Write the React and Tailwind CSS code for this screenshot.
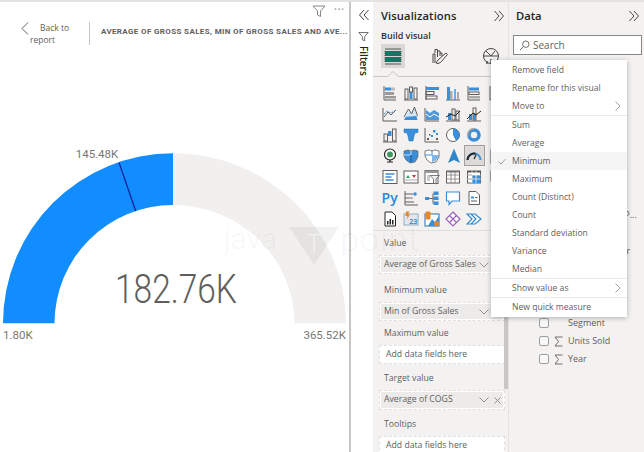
import React from "react";

const G = "#605e5c";
const B = "#3b8fd9";
const D = "#252423";

const icons = [
  <><path d="M2 1v14h12" stroke={G} fill="none"/><rect x="3" y="2.500" width="6" height="3" fill={B}/><rect x="9" y="2.500" width="4" height="3" fill="#bbb"/><rect x="3" y="7" width="9" height="3" fill="#999"/><rect x="3" y="11" width="11" height="2.500" fill="#999"/></>,
  <><path d="M1 15h14" stroke={G}/><rect x="2" y="4" width="3" height="10" fill="none" stroke={G}/><rect x="6.500" y="7" width="3" height="7" fill={B}/><rect x="6.500" y="2" width="3" height="5" fill="none" stroke={G}/><rect x="11" y="3" width="3" height="11" fill="none" stroke={G}/></>,
  <><path d="M2 1v14" stroke={G}/><rect x="2" y="2" width="13" height="3" fill={B}/><rect x="2" y="6.500" width="8" height="3" fill="none" stroke={G}/><rect x="2" y="11" width="11" height="3" fill="none" stroke={G}/></>,
  <><path d="M1 15h14" stroke={G}/><rect x="2" y="2" width="3" height="13" fill={B}/><rect x="5" y="6" width="2.500" height="9" fill="#aaa"/><rect x="9" y="4" width="2" height="11" fill={B} opacity=".7"/><rect x="12" y="7" width="2" height="8" fill="#aaa"/></>,
  <><path d="M2 1v14h12" stroke={G} fill="none"/><rect x="3" y="2.500" width="10" height="3" fill={B}/><rect x="3" y="7" width="10" height="2.500" fill="none" stroke={G}/><rect x="3" y="11" width="11" height="2.500" fill="#aaa"/></>,
  <><path d="M2 1v14h12" stroke={G} fill="none"/><rect x="4" y="4" width="9" height="3" fill={B}/></>,
  <><path d="M1 2v13h14" stroke={G} fill="none"/><path d="M2 11l4-5 3 3 5-5" stroke={G} fill="none"/><path d="M2 8l3-3 4 2 5-3" stroke={B} fill="none" strokeDasharray="2 1"/></>,
  <><path d="M1 14L5.500 5l3 4 3-7 3 12z" fill={B}/><path d="M1 11l4.500-8 3 5 3-7 3 9" stroke={G} fill="#fff" fillOpacity=".75"/></>,
  <><path d="M1 2v13h14" stroke={G} fill="none"/><path d="M2 4l4 3 4-3 5 3v7H2z" fill={B} opacity=".9"/><path d="M2 8l4 3 4-3 5 3" stroke="#fff" fill="none"/></>,
  <><path d="M1 15h14" stroke={G}/><rect x="3" y="7" width="3" height="7" fill={B}/><rect x="7" y="3" width="3" height="11" fill="none" stroke={G}/><rect x="11" y="5" width="3" height="9" fill="none" stroke={G}/><path d="M1 11l5-3 4 2 5-5" stroke={D} fill="none"/></>,
  <><path d="M1 15h14" stroke={G}/><rect x="3" y="8" width="3" height="6" fill={B}/><rect x="7" y="2" width="3" height="12" fill="none" stroke={G}/><rect x="7" y="7" width="3" height="7" fill={B}/><path d="M1 13l6-6 3 2 5-4" stroke={D} fill="none"/></>,
  <rect x="3" y="3" width="12" height="12" fill="#c66" opacity=".6"/>,
  <><path d="M1 15h14" stroke={G}/><rect x="2" y="7" width="3.500" height="7" fill="none" stroke={G}/><rect x="6" y="4" width="3.500" height="5" fill={B}/><rect x="10.500" y="2" width="3.500" height="12" fill="none" stroke={G}/></>,
  <path d="M1 2h14v3.500l-3 .5-1 3-1 5H6L5 9 4 6l-3-.5z" fill={B} stroke="#1f6fb2" strokeWidth=".5"/>,
  <><path d="M1 1v14h14" stroke={G} fill="none"/><g fill={G}><rect x="3" y="11" width="2" height="2"/><rect x="5" y="7" width="1.500" height="1.500"/><rect x="12" y="11" width="2" height="2"/></g><g fill={B}><rect x="9" y="3" width="2.500" height="2.500"/><rect x="7" y="8" width="2" height="2"/><rect x="12" y="6" width="2" height="2"/></g></>,
  <><circle cx="8" cy="8" r="6.500" fill="#fff" stroke={G}/><path d="M8 1.500A6.500 6.500 0 0 1 14.500 8 6.500 6.500 0 0 1 11 13.800L8 8z" fill={B}/></>,
  <><circle cx="8" cy="8" r="5" fill="none" stroke={B} strokeWidth="3.500"/><path d="M8 1.500A6.500 6.500 0 0 0 2 10" fill="none" stroke="#aaa" strokeWidth="1.500"/></>,
  <rect x="3" y="1" width="5" height="14" fill={B}/>,
  <><circle cx="8" cy="6.500" r="5.500" fill="#fff" stroke={D} strokeWidth="1.200"/><circle cx="8" cy="6.500" r="3" fill="#3e9a5c"/><path d="M5 14h6M8 12v2" stroke={D} strokeWidth="1.200"/></>,
  <><path d="M1 3l4-1 3 1 3-1 4 1v6l-3 5-5 1-4-3-2-4z" fill={B} stroke={G} strokeWidth=".7"/><path d="M1 7h7V3" stroke="#fff" fill="none" opacity=".7"/><path d="M8 7v7" stroke="#1f4f7a"/></>,
  <><path d="M1 3l4-1 3 1 3-1 4 1v6l-3 5-5 1-4-3-2-4z" fill="#fff" stroke={G} strokeWidth=".8"/><path d="M8 7h7l-1 3-3 3-3 1z" fill={B} opacity=".65"/><path d="M1 7h7V3" stroke={B} fill="none"/></>,
  <path d="M9 .5L15 15l-6-3-6 3z" fill="#2f87d0"/>,
  <><path d="M1.500 12a6.500 6.500 0 0 1 13 0" fill="none" stroke={B} strokeWidth="2"/><path d="M1.500 12a6.500 6.500 0 0 1 8-6.300" fill="none" stroke={D} strokeWidth="2"/><path d="M8 11l2-4" stroke={D} strokeWidth="1.200"/></>,
  <rect x="3" y="2" width="14" height="13" fill="none" stroke={G}/>,
  <><rect x="1" y="1.500" width="14" height="13" fill="#fff" stroke={G}/><path d="M3.500 5h9M3.500 8h6M3.500 11h8" stroke={B} strokeWidth="1.300"/></>,
  <><rect x="1" y="2" width="14" height="12" fill="#fff" stroke={G}/><path d="M1 11h14" stroke="#aaa"/><path d="M3 9l2-3 2 3z" fill="#3e9a5c"/><path d="M9 6l2 3 2-3z" fill="#d13438"/></>,
  <><rect x="1" y="1.500" width="13" height="13" fill="#fff" stroke={G}/><rect x="1" y="1.500" width="13" height="2.500" fill="#999"/><path d="M3 7h3M3 9h3M3 11h3" stroke="#999"/><path d="M6 6.500h9.500L12 10v5l-2.500-1v-4z" fill="#eee" stroke={G} strokeWidth=".8"/></>,
  <><rect x="1.500" y="2" width="13" height="12" fill="#fff" stroke={G}/><path d="M1.500 6h13M1.500 10h13M6 2v12M10 2v12" stroke="#8a8886" strokeWidth=".9"/><rect x="1.500" y="2" width="13" height="1.500" fill="#777"/></>,
  <><rect x="1.500" y="2" width="13" height="12" fill="#fff" stroke={G}/><rect x="6" y="6" width="8.500" height="8" fill={B}/><rect x="1.500" y="2" width="13" height="1.500" fill="#555"/><path d="M1.500 6h13M1.500 10h13M6 2v12M10 2v12" stroke="#fff" strokeWidth=".7"/><path d="M1.500 6h4.500M1.500 10h4.500" stroke="#8a8886" strokeWidth=".8"/></>,
  <rect x="3" y="2" width="13" height="10" fill="none" stroke={G}/>,
  null,
  <><path d="M2 1v14h13" stroke={G} fill="none"/><path d="M2 4h8M2 8h5M2 12h9" stroke={G}/><circle cx="12" cy="4" r="1.800" fill={B}/><circle cx="8.500" cy="8" r="1.300" fill="#aaa"/></>,
  <><rect x="1" y="7" width="4" height="3" fill={B}/><path d="M5 8.500h4M9 3.500v10" stroke={G}/><rect x="9.500" y="1.500" width="5" height="3.500" fill={B}/><rect x="9.500" y="6.500" width="5" height="3.500" fill={B}/><rect x="9.500" y="11.500" width="5" height="3.500" fill={B}/></>,
  <path d="M1.500 2h13v9H7l-3 3.500V11H1.500z" fill="#fff" stroke={B} strokeWidth="1.200"/>,
  <><path d="M3 1.500h7l3.500 3.500v9.500H3z" fill="#fff" stroke={G}/><rect x="5" y="6.500" width="3" height="2" fill={B}/><path d="M5 11h6M9 7.500h2.500" stroke={G}/></>,
  <path d="M4 3a2 2 0 0 1 2-2v3M3 7h2" stroke={G} fill="none"/>,
  <><path d="M3 1h7l3.500 3.500V15H3z" fill="#fff" stroke={D}/><rect x="5" y="10" width="1.500" height="3.500" fill={D}/><rect x="7.500" y="8" width="1.500" height="5.500" fill={D}/><rect x="10" y="9" width="1.500" height="4.500" fill={D}/></>,
  <><rect x="1" y="3" width="14" height="11" fill="#dcebf7" stroke="#9ab"/><path d="M3 .5h3.500L5 3.500h2L3.500 9 4.500 5h-2z" fill="#e8862a"/><text x="6.200" y="12.500" fontSize="7" fontWeight="700" fill={B} fontFamily="Open Sans, sans-serif">23</text></>,
  <><rect x="1" y="3" width="14" height="12" fill="#fff" stroke="#2a6ca8"/><path d="M4 15l4-7 3 3 4-6v10z" fill={B}/><rect x="1.500" y=".5" width="5" height="8" rx="1" fill="#e8862a"/><circle cx="12.500" cy="12.500" r="2.500" fill="#e8862a"/></>,
  <><path d="M8 1l7 7-7 7-7-7z" fill="#fff" stroke="#9b5fb5" strokeWidth="1.200"/><path d="M4.500 4.500l7 7M11.500 4.500l-7 7" stroke="#9b5fb5" strokeWidth="1.200"/></>,
  <path d="M1 3h8l6 5-6 5H1l5-5zM5 3l5 5-5 5" fill="#fff" stroke="#2f87d0" strokeWidth="1.200"/>,
  <path d="M9 8h6" stroke="#d0862a" strokeWidth="1.500"/>,
];

function Chevrons({ left }) {
  return (
    <svg width="12" height="12" viewBox="0 0 12 12" fill="none" stroke="#484644" strokeWidth="1">
      {left ? <path d="M6 1L1.500 6 6 11M10.500 1L6 6l4.500 5" /> : <path d="M1.500 1L6 6l-4.500 5M6 1l4.500 5L6 11" />}
    </svg>
  );
}

function Funnel({ size = 14, color = "#8a8886" }) {
  return (
    <svg width={size} height={size} viewBox="0 0 14 14" fill="none" stroke={color} strokeWidth="1">
      <path d="M1 2h12L8.500 7v5.500l-3-1.500V7z" />
    </svg>
  );
}

function Down() {
  return (
    <svg width="10" height="6" viewBox="0 0 10 6" fill="none" stroke="#8a8886" strokeWidth=".9">
      <path d="M.5.500L5 5 9.500.500" />
    </svg>
  );
}

function Well({ label, value, close, mb, h = "h-[20px]" }) {
  return (
    <div className={mb}>
      <div className="h-[12px] pl-[5px] text-[8.700px] leading-[12px] text-[#605e5c] mb-[6px]">{label}</div>
      {value ? (
        <div className={`${h} border border-dashed border-[#e1dfdd] bg-white p-[1px] w-[126px]`}>
          <div className={`flex items-center justify-between h-full bg-[#edebe9] pl-[3px] text-[8.700px] text-[#605e5c] ${close ? "pr-[2px]" : "pr-[14px]"}`}>
            <span className="whitespace-nowrap">{value}</span>
            <span className="flex items-center gap-[5px] shrink-0">
              <Down />
              {close && (
                <svg width="7" height="7" viewBox="0 0 7 7" stroke="#8a8886" strokeWidth=".9">
                  <path d="M.5.500l6 6M6.500.500l-6 6" />
                </svg>
              )}
            </span>
          </div>
        </div>
      ) : (
        <div className={`${h} border border-dashed border-[#e1dfdd] bg-white w-[126px] pl-[6px] flex items-center text-[8.700px] text-[#605e5c]`}>
          Add data fields here
        </div>
      )}
    </div>
  );
}

function Field({ name, sigma }) {
  return (
    <div className="h-[18px] flex items-center pl-[30px]">
      <span className="w-[10px] h-[10px] rounded-[2px] border border-[#a19f9d] bg-[#f8f8f8] shrink-0" />
      <span className="w-[19px] flex justify-center shrink-0">
        {sigma && (
          <svg width="9" height="11" viewBox="0 0 9 11" fill="none" stroke="#605e5c" strokeWidth=".9">
            <path d="M8.500 1H1l3.500 4.500L1 10h7.500" />
          </svg>
        )}
      </span>
      <span className="text-[9px] whitespace-nowrap text-[#605e5c]">{name}</span>
    </div>
  );
}

function MenuItem({ children, arrow, active, check }) {
  return (
    <div className={`relative h-[18px] flex items-center justify-between pl-[21px] pr-[6px] text-[8.600px] text-[#605e5c] ${active ? "bg-[#f5f5f5]" : ""}`}>
      {check && (
        <svg className="absolute left-[7px] top-[6px]" width="8" height="7" viewBox="0 0 8 7" fill="none" stroke="#8a8886" strokeWidth=".8">
          <path d="M.5 3.500L3 6 7.500 1" />
        </svg>
      )}
      <span>{children}</span>
      {arrow && (
        <svg width="6" height="10" viewBox="0 0 6 10" fill="none" stroke="#8a8886" strokeWidth=".8">
          <path d="M.5.500L5 5 .5 9.500" />
        </svg>
      )}
    </div>
  );
}

export default function App() {
  return (
    <div className="relative w-[644px] h-[452px] overflow-hidden bg-white flex flex-col font-['Open_Sans',sans-serif]">
      <div className="h-[2px] bg-[#e3e3e3] shrink-0" />
      <div className="flex flex-1 min-h-0">
        {/* report */}
        <div className="w-[351px] shrink-0 border-r-[2px] border-[#c8c6c4] bg-white flex flex-col">
          <div className="flex justify-end items-center gap-[8px] h-[17px] pr-[4px] pt-[1px]">
            <Funnel size={14} />
            <span className="text-[7px] leading-none tracking-[1px] text-[#a19f9d] -mt-[4px]">•••</span>
          </div>
          <div className="flex items-center h-[26px] mt-[1px] pl-[21px]">
            <svg width="8" height="13" viewBox="0 0 8 13" fill="none" stroke="#605e5c" strokeWidth="1" className="-mt-[9px]">
              <path d="M7 .5L1 6.500 7 12.500" />
            </svg>
            <div className="w-[69px] -ml-[8px] pl-[9px] text-[8.500px] leading-[12px] text-[#605e5c] mt-[2px]">
              <div className="pl-[10px]">Back to</div>
              <div>report</div>
            </div>
            <div className="h-[23px] w-px bg-[#c8c6c4] -ml-[1px]" />
            <div className="ml-[11px] -mt-[2px] text-[8px] font-['Roboto',sans-serif] font-bold tracking-[.36px] text-[#605e5c] whitespace-nowrap">
              AVERAGE OF GROSS SALES, MIN OF GROSS SALES AND AVE...
            </div>
          </div>
          <svg width="349" height="215" viewBox="0 0 349 215" className="mt-[94px]">
            <path d="M3 183.300A170 170 0 0 1 173 13.300V65A118.500 118.500 0 0 0 54.500 183.300Z" fill="#118dff" />
            <path d="M173 13.300A173 170 0 0 1 346 183.300H294.500A121.500 118.500 0 0 0 173 65Z" fill="#f1f0ef" />
            <path d="M119 22.500L135.700 71" stroke="#12239e" strokeWidth="1.300" />
            <text x="97" y="18" textAnchor="middle" fontSize="11.500" fill="#777" fontFamily="Roboto, sans-serif">145.48K</text>
            <text x="115" y="163" textLength="122" lengthAdjust="spacingAndGlyphs" fontSize="40" fontWeight="300" fill="#605e5c" fontFamily="Roboto, sans-serif">182.76K</text>
            <text x="3" y="199" fontSize="11.500" fill="#777" fontFamily="Roboto, sans-serif">1.80K</text>
            <text x="346" y="199" textAnchor="end" fontSize="11.500" fill="#777" fontFamily="Roboto, sans-serif">365.52K</text>
          </svg>
        </div>

        {/* filters rail */}
        <div className="w-[22px] shrink-0 bg-white flex flex-col items-center pl-[3px]">
          <div className="mt-[7px]"><Chevrons left /></div>
          <div className="mt-[10px]"><Funnel size={11} color="#484644" /></div>
          <div className="mt-[4px] text-[10px] font-semibold leading-none text-[#252423] [writing-mode:vertical-rl]">Filters</div>
        </div>

        {/* visualizations */}
        <div className="relative w-[136px] shrink-0 bg-[#f3f2f1] border-r border-[#e6e4e2] pl-[3px]">
          <div className="flex items-center justify-between h-[24px] pl-[5px] pr-[5px] pt-[4px] w-[134px]">
            <span className="text-[11.200px] font-semibold text-[#252423] tracking-[.1px] whitespace-nowrap">Visualizations</span>
            <Chevrons />
          </div>
          <div className="pl-[5px] text-[9px] font-semibold leading-[12px] mt-[4px] text-[#323130]">Build visual</div>
          <div className="flex items-center pl-[5px] mt-[2px] h-[24px] w-[130px]">
            <div className="w-[24px] h-[24px] bg-[#d9d8d6] flex items-center justify-center shrink-0">
              <svg width="18" height="17" viewBox="0 0 18 17">
                <path d="M1 1h16M1 16h16" stroke="#555" />
                <rect x="1" y="3" width="16" height="5" fill="#117865" />
                <rect x="1" y="9" width="16" height="5" fill="#117865" />
                <path d="M1 3v11M17 3v11" stroke="#555" strokeDasharray="1 1" />
              </svg>
            </div>
            <svg width="18" height="18" viewBox="0 0 18 18" fill="none" stroke="#484644" strokeWidth="1" className="ml-[26px] shrink-0">
              <path d="M2 16V7h2v9M4 6V2.500h2.500V10M6.500 4h2.500v5M9 6h2v3" />
              <path d="M5 16l2-3 8-7 1.500 1.500-7 8-2.500 1z" fill="#f3f2f1" />
            </svg>
            <svg width="18" height="18" viewBox="0 0 18 18" fill="none" stroke="#484644" strokeWidth="1" className="ml-[33px] shrink-0">
              <circle cx="9" cy="9" r="7.500" />
              <path d="M1.500 9h15M4 4l5 5 4-5" />
              <path d="M5 14v3M9 12v5M13 13v4" strokeWidth="1.300" />
            </svg>
          </div>
          <div className="relative h-[9px]">
            <div className="absolute left-[-3px] right-0 top-[8px] h-px bg-[#c8c6c4]" />
            <svg className="absolute left-[11px] top-[3px]" width="12" height="6" viewBox="0 0 12 6">
              <path d="M0 6L6 .5 12 6" fill="#f3f2f1" stroke="#c8c6c4" />
            </svg>
          </div>
          <div className="grid grid-cols-[repeat(6,21.200px)] auto-rows-[21px] mt-[5px] pl-[3px]">
            {icons.map((ic, i) => (
              <div key={i} className={`flex items-center justify-center ${i === 22 ? "bg-[#dcdbd9] border border-[#a19f9d]" : ""}`}>
                {ic && (
                  <svg width="16" height="16" viewBox="0 0 16 16" className="overflow-hidden">{ic}</svg>
                )}
                {i === 30 && <span className="text-[14px] font-semibold leading-none text-[#2b88d8]">Py</span>}
              </div>
            ))}
          </div>
          <div className="h-px bg-[#e1dfdd] mt-[1px] -ml-[3px] mb-[6px]" />
          <div className="pl-[3px]">
            <Well label="Value" value="Average of Gross Sales" mb="mb-[10px]" h="h-[19px]" />
            <Well label="Minimum value" value="Min of Gross Sales" mb="mb-[6px]" h="h-[19px]" />
            <Well label="Maximum value" mb="mb-[8px]" h="h-[19px]" />
            <Well label="Target value" value="Average of COGS" close mb="mb-[8px]" />
            <Well label="Tooltips" />
          </div>
          <div className="absolute right-0 top-[58px] w-[4px] h-[329px] bg-[#c8c6c4]" />
        </div>

        {/* data */}
        <div className="flex-1 min-w-0 bg-[#f3f2f1] overflow-hidden">
          <div className="flex items-center justify-between h-[24px] pl-[7px] pr-[4px] pt-[4px]">
            <span className="text-[11.200px] font-semibold text-[#252423]">Data</span>
            <Chevrons />
          </div>
          <div className="ml-[4px] mr-[2px] mt-[9px] h-[20px] bg-white border border-[#8a8886] flex items-center pl-[5px] gap-[3px] text-[10px] text-[#605e5c]">
            <svg width="11" height="11" viewBox="0 0 11 11" fill="none" stroke="#605e5c" strokeWidth=".9">
              <circle cx="6.800" cy="4.200" r="3.200" />
              <path d="M4.500 6.500L1 10" />
            </svg>
            Search
          </div>
          <div className="mt-[151px]">
            <Field name="Manufacture P..." sigma />
            <Field name="Month Name" />
            <Field name="Order Number" sigma />
            <Field name="Product" />
            <Field name="Profit" sigma />
            <Field name="Sale Price" sigma />
            <Field name="Segment" />
            <Field name="Units Sold" sigma />
            <Field name="Year" sigma />
          </div>
        </div>
      </div>

      {/* watermark */}
      <div className="absolute left-[224px] top-[216px] flex items-start pointer-events-none text-[30px] leading-[46px] font-light text-black/[.05] font-['Roboto',sans-serif] whitespace-nowrap">
        <span className="w-[52px]">java</span>
        <svg width="52" height="40" viewBox="0 0 52 40" className="ml-[12px] mt-[11px] shrink-0">
          <path d="M1 0h50L26 38z" fill="#000" fillOpacity=".05" />
          <text x="26" y="26" textAnchor="middle" fontSize="26" fill="#fff" fillOpacity=".5">T</text>
        </svg>
        <span className="text-[34px] tracking-[1px]">point</span>
      </div>

      {/* context menu */}
      <div className="absolute left-[491px] top-[60px] w-[136px] h-[257px] bg-white shadow-[0_1px_5px_rgba(0,0,0,.28)] pt-[1px]">
        <MenuItem>Remove field</MenuItem>
        <MenuItem>Rename for this visual</MenuItem>
        <MenuItem arrow>Move to</MenuItem>
        <div className="h-px bg-[#edebe9]" />
        <MenuItem>Sum</MenuItem>
        <MenuItem>Average</MenuItem>
        <MenuItem active check>Minimum</MenuItem>
        <MenuItem>Maximum</MenuItem>
        <MenuItem>Count (Distinct)</MenuItem>
        <MenuItem>Count</MenuItem>
        <MenuItem>Standard deviation</MenuItem>
        <MenuItem>Variance</MenuItem>
        <MenuItem>Median</MenuItem>
        <div className="h-px bg-[#edebe9]" />
        <MenuItem arrow>Show value as</MenuItem>
        <div className="h-px bg-[#edebe9]" />
        <MenuItem>New quick measure</MenuItem>
      </div>
    </div>
  );
}
